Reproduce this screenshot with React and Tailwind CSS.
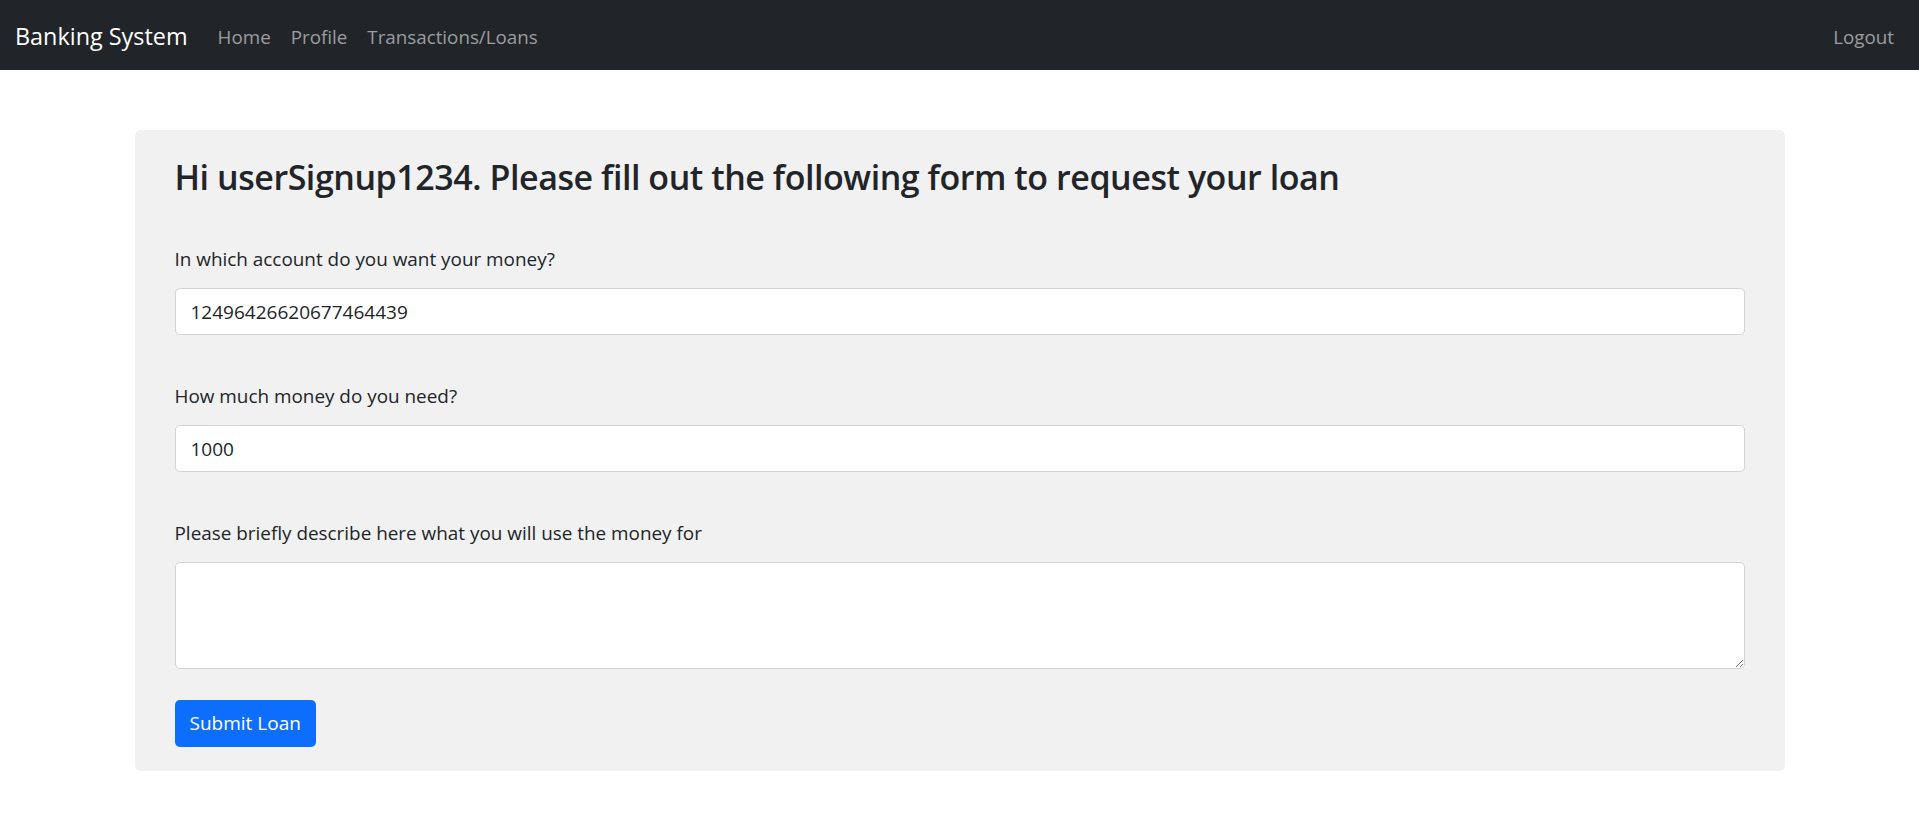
const FONT = { fontFamily: '"Open Sans", "Noto Sans", Arial, sans-serif' }

const NAV = ['Home', 'Profile', 'Transactions/Loans']

function Field({ label, children }) {
  return (
    <div>
      <label className="block text-[18.9px] leading-[30px] text-[#212529]">{label}</label>
      <div className="mt-[14px]">{children}</div>
    </div>
  )
}

export default function App() {
  return (
    <div className="min-h-screen bg-white" style={FONT}>

      {/* Navbar */}
      <nav className="h-[70px] bg-[#212529] flex items-center px-[15px] pt-[4px]">
        <span className="text-white text-[23.4px] mr-[20px]">Banking System</span>
        {NAV.map(n => (
          <a key={n} className="px-[10px] text-[18.8px] text-[#9b9d9f]">{n}</a>
        ))}
        <a className="ml-auto px-[10px] text-[18.8px] text-[#9b9d9f]">Logout</a>
      </nav>

      {/* Loan form */}
      <div className="w-[1650px] mx-auto mt-[60px]">
        <div className="bg-[#f1f1f1] rounded-[6px] px-[40px] pt-[23px] pb-[24px]">
          <h2 className="text-[34px] leading-[48px] font-semibold tracking-[-0.45px] text-[#212529]">
            Hi userSignup1234. Please fill out the following form to request your loan
          </h2>

          <div className="mt-[43px] flex flex-col gap-[46px]">
            <Field label="In which account do you want your money?">
              <input
                readOnly
                value="12496426620677464439"
                className="w-full h-[47px] bg-white border border-[#ced4da] rounded-[5px] px-[15px] text-[19px] text-[#212529] outline-none"
              />
            </Field>
            <Field label="How much money do you need?">
              <input
                readOnly
                value="1000"
                className="w-full h-[47px] bg-white border border-[#ced4da] rounded-[5px] px-[15px] text-[19px] text-[#212529] outline-none"
              />
            </Field>
            <Field label="Please briefly describe here what you will use the money for">
              <textarea
                className="block w-full h-[107px] bg-white border border-[#ced4da] rounded-[5px] px-[15px] py-[8px] text-[19px] text-[#212529] outline-none"
              />
            </Field>
          </div>

          <button className="mt-[31px] h-[47px] px-[15px] bg-[#0d6efd] text-white text-[19px] rounded-[5px]">
            Submit Loan
          </button>
        </div>
      </div>
    </div>
  )
}
